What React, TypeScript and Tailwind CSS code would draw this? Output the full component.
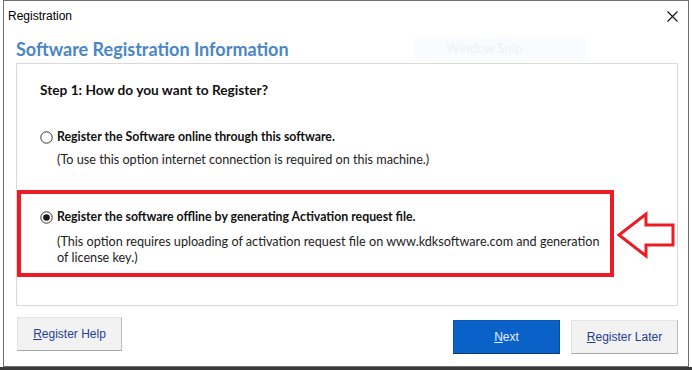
import React from "react";

function Radio({ checked }: { checked?: boolean }) {
  return (
    <svg width="13" height="13" viewBox="0 0 13 13" className="shrink-0">
      <circle cx="6.5" cy="6.5" r="5.7" fill="white" stroke="#333" strokeWidth="1" />
      {checked && <circle cx="6.5" cy="6.5" r="3.3" fill="#1a1a1a" />}
    </svg>
  );
}

export default function App() {
  const body = { fontFamily: "Lato, 'Open Sans', sans-serif" };
  const ui = { fontFamily: "'Liberation Sans', Arial, sans-serif" };
  return (
    <div className="relative w-[692px] h-[370px] bg-white overflow-hidden">
      <div className="ml-[3px] w-[686px] h-[367px] border border-[#6f6f6f] flex flex-col bg-white">
        {/* title bar */}
        <div className="h-[30px] flex items-center justify-between pl-[4px] pr-[10px]" style={ui}>
          <span className="text-[12px] text-black">Registration</span>
          <svg width="11" height="11" viewBox="0 0 11 11">
            <path d="M0.5 0.5 L10.5 10.5 M10.5 0.5 L0.5 10.5" stroke="#111" strokeWidth="1.1" />
          </svg>
        </div>
        {/* heading */}
        <div className="mt-[6px] h-[24px] pl-[12px] flex items-center" style={body}>
          <span className="text-[18px] font-bold text-[#4a86c4] leading-[24px]">
            Software Registration Information
          </span>
        </div>
        {/* panel */}
        <div className="mt-[2px] ml-[12px] w-[662px] h-[243px] border border-[#d9d9d9] flex flex-col" style={body}>
          <div className="pt-[16px] pl-[23px] leading-[20px] text-[13.7px] font-bold text-[#111]">
            Step 1: How do you want to Register?
          </div>
          <div className="mt-[27px] pl-[23px] flex items-center gap-[4px] leading-[20px]">
            <Radio />
            <span className="text-[12.3px] font-bold text-[#111]">
              Register the Software online through this software.
            </span>
          </div>
          <div className="mt-[3px] pl-[40px] leading-[20px] text-[12.65px] text-[#222]">
            (To use this option internet connection is required on this machine.)
          </div>
          <div className="mt-[20px] w-[597px] h-[87px] border-4 border-[#ed1c24] flex flex-col">
            <div className="pt-[13px] pl-[19px] flex items-center gap-[4px] leading-[20px]">
              <Radio checked />
              <span className="text-[12.3px] font-bold text-[#111]">
                Register the software offline by generating Activation request file.
              </span>
            </div>
            <div className="mt-[7px] pl-[36px] leading-[16px] text-[12.65px] text-[#222] whitespace-nowrap">
              (This option requires uploading of activation request file on www.kdksoftware.com and generation
              <br />
              of license key.)
            </div>
          </div>
        </div>
        {/* buttons */}
        <div className="flex items-start pl-[13px] pr-[10px]" style={ui}>
          <button className="mt-[11px] w-[105px] h-[34px] bg-[#f2f2f2] border border-[#e3e3e3] border-b-[#a6a6a6] border-r-[#bdbdbd] text-[12px] text-[#1f3f99]">
            <span className="underline">R</span>egister Help
          </button>
          <div className="flex-1" />
          <button className="mt-[14px] w-[107px] h-[34px] bg-[#0a62c9] border border-[#0a55b0] border-b-[#08397a] border-r-[#0a4a99] text-[12px] text-[#e6eeff]">
            <span className="underline">N</span>ext
          </button>
          <button className="mt-[14px] ml-[11px] w-[107px] h-[34px] bg-[#f2f2f2] border border-[#e3e3e3] border-b-[#a6a6a6] border-r-[#bdbdbd] text-[12px] text-[#1f3f99]">
            <span className="underline">R</span>egister Later
          </button>
        </div>
      </div>
      <div className="h-[3px] bg-[#3a3a3a]" />
      {/* ghost snip label */}
      <div className="absolute left-[414px] top-[37px] w-[172px] h-[23px] bg-[#fafbfe] flex items-center pl-[32px]" style={body}>
        <span className="text-[13px] text-[#f0f1f4]">Window Snip</span>
      </div>
      {/* annotation arrow */}
      <svg className="absolute left-[612px] top-[208px]" width="66" height="54" viewBox="612 208 66 54">
        <path
          d="M619 235 L646 214 L646 225 L673 225 L673 245 L646 245 L646 256 Z"
          fill="white"
          stroke="#ed1c24"
          strokeWidth="3"
          strokeLinejoin="miter"
        />
      </svg>
    </div>
  );
}
